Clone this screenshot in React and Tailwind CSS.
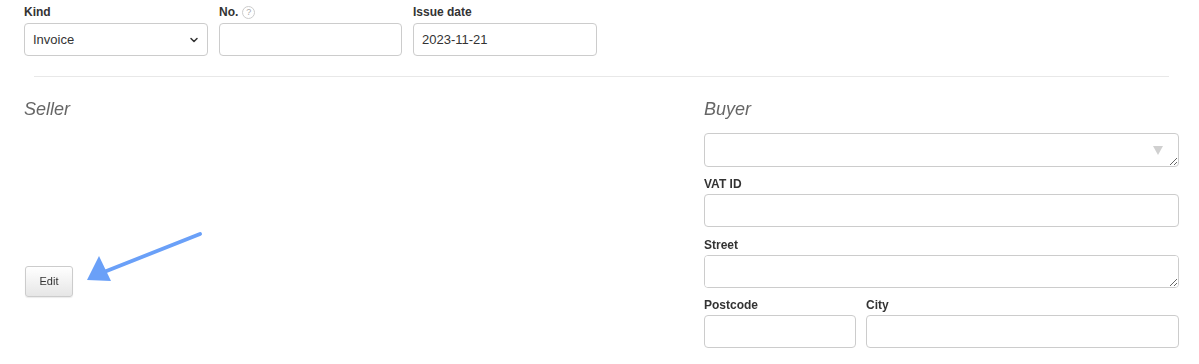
import { ChevronDown } from "lucide-react";

const font = { fontFamily: '"Liberation Sans", Arial, sans-serif' };

const Label = ({ children, mb = "mb-[3px]" }) => (
  <label className={`block text-[12px] leading-[14px] font-bold text-[#333] ${mb}`}>
    {children}
  </label>
);

const inputCls =
  "block w-full h-[33px] px-[8px] border border-[#ccc] rounded-[4px] bg-white text-[13px] text-[#333] outline-none";

const App = () => {
  return (
    <div className="bg-white w-[1199px] h-[364px] overflow-hidden pl-[24px] pr-[20px] pt-[5px]" style={font}>

      {/* top row */}
      <div className="flex gap-[11px]">
        <div className="w-[184px]">
          <Label mb="mb-[4px]">Kind</Label>
          <div className="relative">
            <select className={`${inputCls} appearance-none`} defaultValue="Invoice">
              <option>Invoice</option>
              <option>Proforma</option>
            </select>
            <ChevronDown className="absolute right-[8px] top-[11px] w-[12px] h-[12px] text-[#333] pointer-events-none" strokeWidth={3} />
          </div>
        </div>

        <div className="w-[183px]">
          <label className="flex items-center gap-[4px] text-[12px] leading-[14px] font-bold text-[#333] mb-[4px]">
            No.
            <span className="inline-flex items-center justify-center w-[13px] h-[13px] rounded-full border border-[#ccc] text-[9px] font-normal text-[#aaa]">
              ?
            </span>
          </label>
          <input className={inputCls} />
        </div>

        <div className="w-[184px]">
          <Label mb="mb-[4px]">Issue date</Label>
          <input className={inputCls} defaultValue="2023-11-21" />
        </div>
      </div>

      <hr className="mt-[20px] ml-[10px] mr-[10px] border-0 border-t border-[#e8e8e8]" />

      {/* seller / buyer */}
      <div className="flex mt-[21px]">
        <div className="flex-1 relative">
          <h3 className="text-[18px] leading-[22px] italic text-[#666]">Seller</h3>

          <button className="mt-[146px] ml-[1px] w-[48px] h-[31px] border border-[#ccc] rounded-[3px] bg-gradient-to-b from-white to-[#e6e6e6] text-[11px] text-[#333] shadow-[0_1px_1px_rgba(0,0,0,0.08)]">
            Edit
          </button>

          <svg className="absolute left-[56px] top-[130px]" width="130" height="60" viewBox="0 0 130 60">
            <line x1="120" y1="6" x2="24" y2="44" stroke="#6aa0f8" strokeWidth="4" strokeLinecap="round" />
            <polygon points="7,52 19,28 31,53" fill="#6aa0f8" />
          </svg>
        </div>

        <div className="w-[475px]">
          <h3 className="text-[18px] leading-[22px] italic text-[#666]">Buyer</h3>

          <div className="relative mt-[13px]">
            <textarea className="block w-full h-[34px] px-[8px] py-[6px] border border-[#ccc] rounded-[4px] bg-white text-[13px] outline-none resize-y" />
            <svg className="absolute right-[16px] top-[13px] pointer-events-none" width="10" height="9" viewBox="0 0 10 9">
              <polygon points="0,0 10,0 5,9" fill="#d0d0d0" />
            </svg>
          </div>

          <div className="mt-[10px]">
            <Label>VAT ID</Label>
            <input className={inputCls} />
          </div>

          <div className="mt-[11px]">
            <Label>Street</Label>
            <textarea className="block w-full h-[33px] px-[8px] py-[6px] border border-[#ccc] rounded-[4px] bg-white text-[13px] outline-none resize-y" />
          </div>

          <div className="flex gap-[10px] mt-[10px]">
            <div className="w-[152px]">
              <Label>Postcode</Label>
              <input className={inputCls} />
            </div>
            <div className="flex-1">
              <Label>City</Label>
              <input className={inputCls} />
            </div>
          </div>
        </div>
      </div>
    </div>
  );
};

export default App;
